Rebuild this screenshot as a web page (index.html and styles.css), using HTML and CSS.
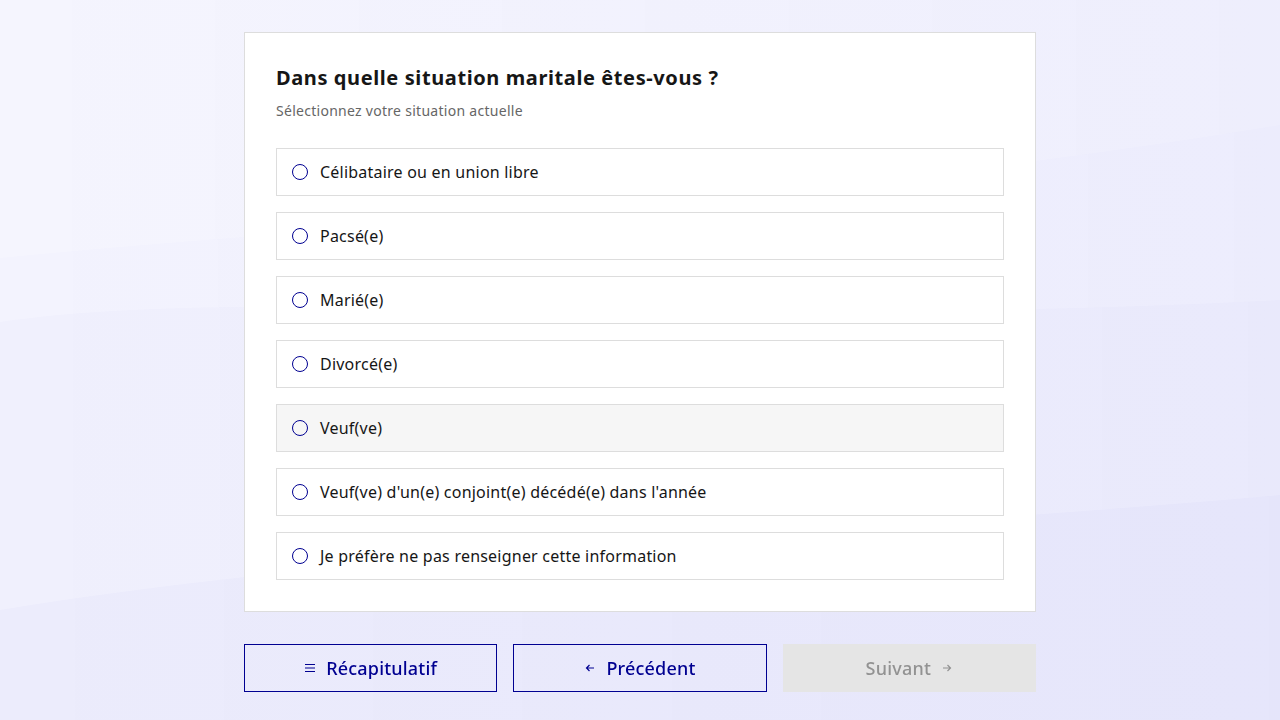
FILE: index.html
```html
<!DOCTYPE html>
<html lang="fr">
<head>
<meta charset="utf-8">
<title>Situation maritale</title>
<link rel="stylesheet" href="styles.css">
</head>
<body>
<div class="bg">
  <svg class="waves" viewBox="0 0 1280 720" preserveAspectRatio="none" aria-hidden="true">
    <defs>
      <linearGradient id="hz" x1="0" y1="0" x2="1" y2="0">
        <stop offset="0" stop-color="#3a3ad8" stop-opacity="0"/>
        <stop offset="1" stop-color="#3a3ad8" stop-opacity="0.035"/>
      </linearGradient>
    </defs>
    <path d="M0 258 C 300 228, 800 205, 1280 125 L1280 720 L0 720 Z" fill="#3a3ad8" opacity="0.012"/>
    <path d="M0 322 C 250 285, 700 330, 1280 300 L1280 720 L0 720 Z" fill="#3a3ad8" opacity="0.014"/>
    <path d="M0 610 C 400 545, 900 530, 1280 495 L1280 720 L0 720 Z" fill="#3a3ad8" opacity="0.018"/>
    <rect x="0" y="0" width="1280" height="720" fill="url(#hz)"/>
  </svg>
</div>
<main class="page">
  <section class="card">
    <h1 class="title">Dans quelle situation maritale êtes-vous ?</h1>
    <p class="hint">Sélectionnez votre situation actuelle</p>
    <ul class="options">
      <li class="option"><span class="radio"></span><span>Célibataire ou en union libre</span></li>
      <li class="option"><span class="radio"></span><span>Pacsé(e)</span></li>
      <li class="option"><span class="radio"></span><span>Marié(e)</span></li>
      <li class="option"><span class="radio"></span><span>Divorcé(e)</span></li>
      <li class="option option-hover"><span class="radio"></span><span>Veuf(ve)</span></li>
      <li class="option"><span class="radio"></span><span>Veuf(ve) d'un(e) conjoint(e) décédé(e) dans l'année</span></li>
      <li class="option"><span class="radio"></span><span>Je préfère ne pas renseigner cette information</span></li>
    </ul>
  </section>
  <nav class="actions">
    <button class="btn btn-secondary" type="button">
      <svg class="ico" viewBox="0 0 12 12" aria-hidden="true"><path d="M1 2.5h10M1 6h10M1 9.5h10" stroke="#000091" stroke-width="1.2" fill="none"/></svg>
      <span>Récapitulatif</span>
    </button>
    <button class="btn btn-secondary" type="button">
      <svg class="ico" viewBox="0 0 12 12" aria-hidden="true"><path d="M10 6H2.5M5.5 3L2.5 6l3 3" stroke="#000091" stroke-width="1.2" fill="none"/></svg>
      <span>Précédent</span>
    </button>
    <button class="btn btn-disabled" type="button" disabled>
      <span>Suivant</span>
      <svg class="ico" viewBox="0 0 12 12" aria-hidden="true"><path d="M2 6h7.5M6.5 3l3 3-3 3" stroke="#929292" stroke-width="1.2" fill="none"/></svg>
    </button>
  </nav>
</main>
</body>
</html>
```
FILE: styles.css
```css
* { box-sizing: border-box; }
html, body { margin: 0; padding: 0; height: 100%; }
body {
  font-family: "Noto Sans", "Open Sans", sans-serif;
  color: #161616;
  background: #f5f5fe;
  overflow: hidden;
}
.bg { position: fixed; inset: 0; z-index: 0; }
.waves { width: 100%; height: 100%; display: block; }
.page {
  position: relative;
  z-index: 1;
  width: 792px;
  margin: 0 auto;
  padding-top: 32px;
}
.card {
  background: #fff;
  border: 1px solid #dddddd;
  padding: 31px;
}
.title {
  margin: 0;
  font-size: 20px;
  line-height: 28px;
  font-weight: 700;
  letter-spacing: 0.6px;
  color: #161616;
}
.hint {
  margin: 7px 0 0;
  font-size: 14px;
  line-height: 24px;
  letter-spacing: 0.28px;
  color: #666666;
}
.options {
  list-style: none;
  margin: 25px 0 0;
  padding: 0;
  display: flex;
  flex-direction: column;
  gap: 16px;
}
.option {
  height: 48px;
  border: 1px solid #dddddd;
  display: flex;
  align-items: center;
  gap: 12px;
  padding: 0 15px;
  font-size: 16px;
  letter-spacing: 0.22px;
  color: #161616;
  background: #fff;
}
.option-hover { background: #f6f6f6; }
.radio {
  width: 16px;
  height: 16px;
  border-radius: 50%;
  border: 1px solid #000091;
  flex: none;
}
.actions {
  margin-top: 32px;
  display: grid;
  grid-template-columns: repeat(3, 1fr);
  gap: 16px;
}
.btn {
  height: 48px;
  display: flex;
  align-items: center;
  justify-content: center;
  gap: 10px;
  font-family: inherit;
  font-size: 18px;
  font-weight: 500;
  letter-spacing: 0.2px;
  padding: 0 16px;
  cursor: pointer;
}
.btn-secondary {
  background: transparent;
  border: 1px solid #000091;
  color: #000091;
}
.btn-disabled {
  background: #e5e5e5;
  border: 1px solid #e5e5e5;
  color: #929292;
}
.ico { width: 12px; height: 12px; flex: none; }
```
